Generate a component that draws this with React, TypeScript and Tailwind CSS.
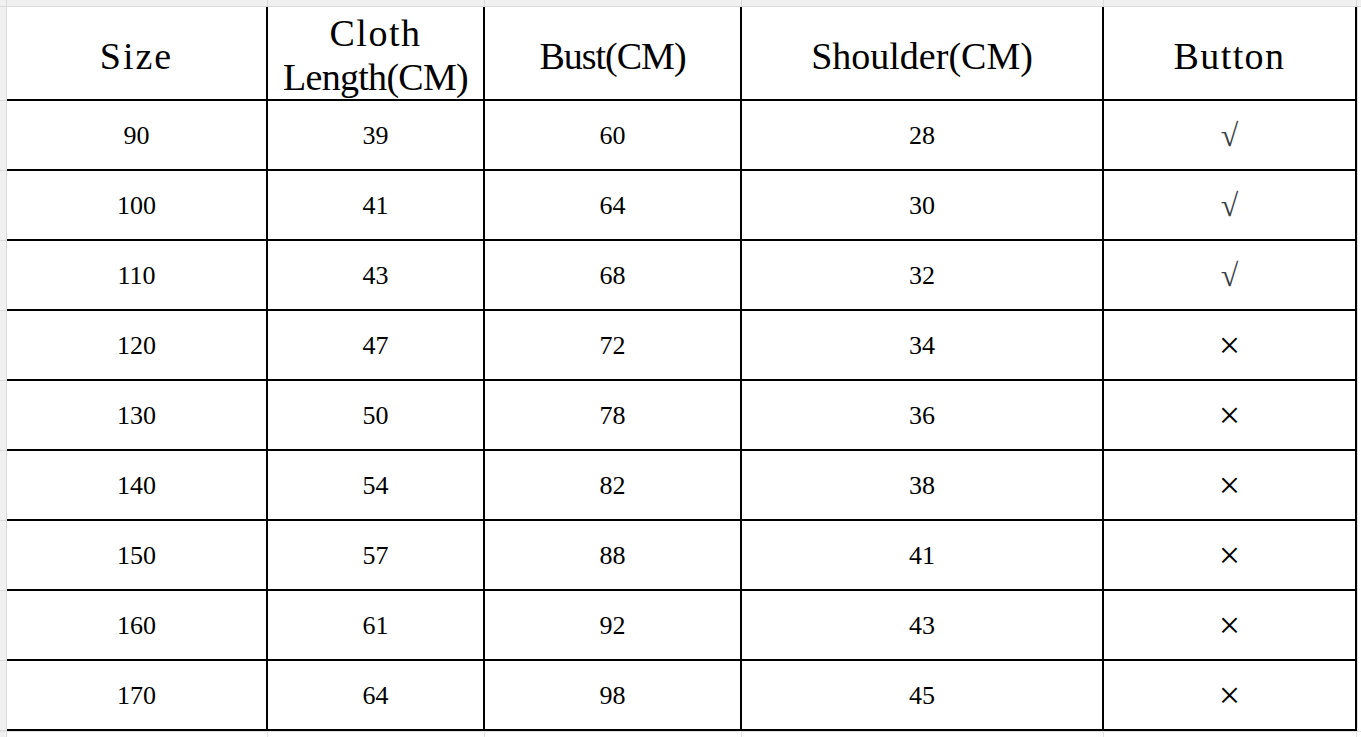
import React from 'react';

type Row = [string, string, string, string, boolean];

const rows: Row[] = [
  ['90', '39', '60', '28', true],
  ['100', '41', '64', '30', true],
  ['110', '43', '68', '32', true],
  ['120', '47', '72', '34', false],
  ['130', '50', '78', '36', false],
  ['140', '54', '82', '38', false],
  ['150', '57', '88', '41', false],
  ['160', '61', '92', '43', false],
  ['170', '64', '98', '45', false],
];

const cols = ['w-[261px]', 'w-[217px]', 'w-[257px]', 'w-[362px]', 'w-[253px]'];

const serif = { fontFamily: '"Liberation Serif", "Times New Roman", serif' };

const App: React.FC = () => {
  return (
    <div className="w-[1361px] h-[737px] bg-white overflow-hidden flex flex-col" style={serif}>
      {/* sheet frame: top strip */}
      <div className="flex h-[7px] shrink-0 bg-[#f0f0f0] border-b border-[#dadada]">
        <div className="w-[7px] border-r border-[#dadada]" />
        {cols.map((c, i) => (
          <div key={i} className={`${c} border-r border-[#dadada]`} />
        ))}
        <div className="flex-1" />
      </div>

      <div className="flex">
        {/* sheet frame: left strip */}
        <div className="w-[7px] shrink-0 flex flex-col bg-[#f0f0f0] border-r border-[#dadada]">
          <div className="h-[94px] border-b border-[#dadada]" />
          {rows.map((r) => (
            <div key={r[0]} className="h-[70px] border-b border-[#dadada]" />
          ))}
        </div>

        <div className="flex flex-col text-black">
          {/* header */}
          <div className="flex h-[94px]">
            <div className={`${cols[0]} border-r-2 border-b-2 border-black flex items-center justify-center pt-[6px]`}>
              <span className="text-[38px] leading-none tracking-[2px]">Size</span>
            </div>
            <div className={`${cols[1]} border-r-2 border-b-2 border-black flex flex-col items-center justify-center pt-[4px]`}>
              <span className="text-[38px] leading-[44px] tracking-[1.5px]">Cloth</span>
              <span className="text-[38px] leading-[44px] tracking-[-0.7px]">Length(CM)</span>
            </div>
            <div className={`${cols[2]} border-r-2 border-b-2 border-black flex items-center justify-center pt-[6px]`}>
              <span className="text-[38px] leading-none tracking-[-1px]">Bust(CM)</span>
            </div>
            <div className={`${cols[3]} border-r-2 border-b-2 border-black flex items-center justify-center pt-[6px]`}>
              <span className="text-[38px] leading-none">Shoulder(CM)</span>
            </div>
            <div className={`${cols[4]} border-r-2 border-b-2 border-black flex items-center justify-center pt-[6px]`}>
              <span className="text-[38px] leading-none tracking-[1.4px]">Button</span>
            </div>
          </div>

          {/* body */}
          {rows.map((r) => (
            <div key={r[0]} className="flex h-[70px] text-[26px]">
              {r.slice(0, 4).map((v, i) => (
                <div key={i} className={`${cols[i]} border-r-2 border-b-2 border-black flex items-center justify-center`}>
                  {v as string}
                </div>
              ))}
              <div className={`${cols[4]} border-r-2 border-b-2 border-black flex items-center justify-center`}>
                {r[4] ? (
                  <span className="text-[#3b4148] text-[32px] leading-none">√</span>
                ) : (
                  <span className="text-[38px] leading-none font-light">×</span>
                )}
              </div>
            </div>
          ))}
        </div>

        <div className="flex-1 border-l border-[#e2e2e2]" />
      </div>

      <div className="flex flex-1 border-t border-[#e2e2e2]">
        <div className="w-[7px] bg-[#f0f0f0] border-r border-[#dadada]" />
        {cols.map((c, i) => (
          <div key={i} className={`${c} border-r border-[#e2e2e2]`} />
        ))}
      </div>
    </div>
  );
};

export default App;
